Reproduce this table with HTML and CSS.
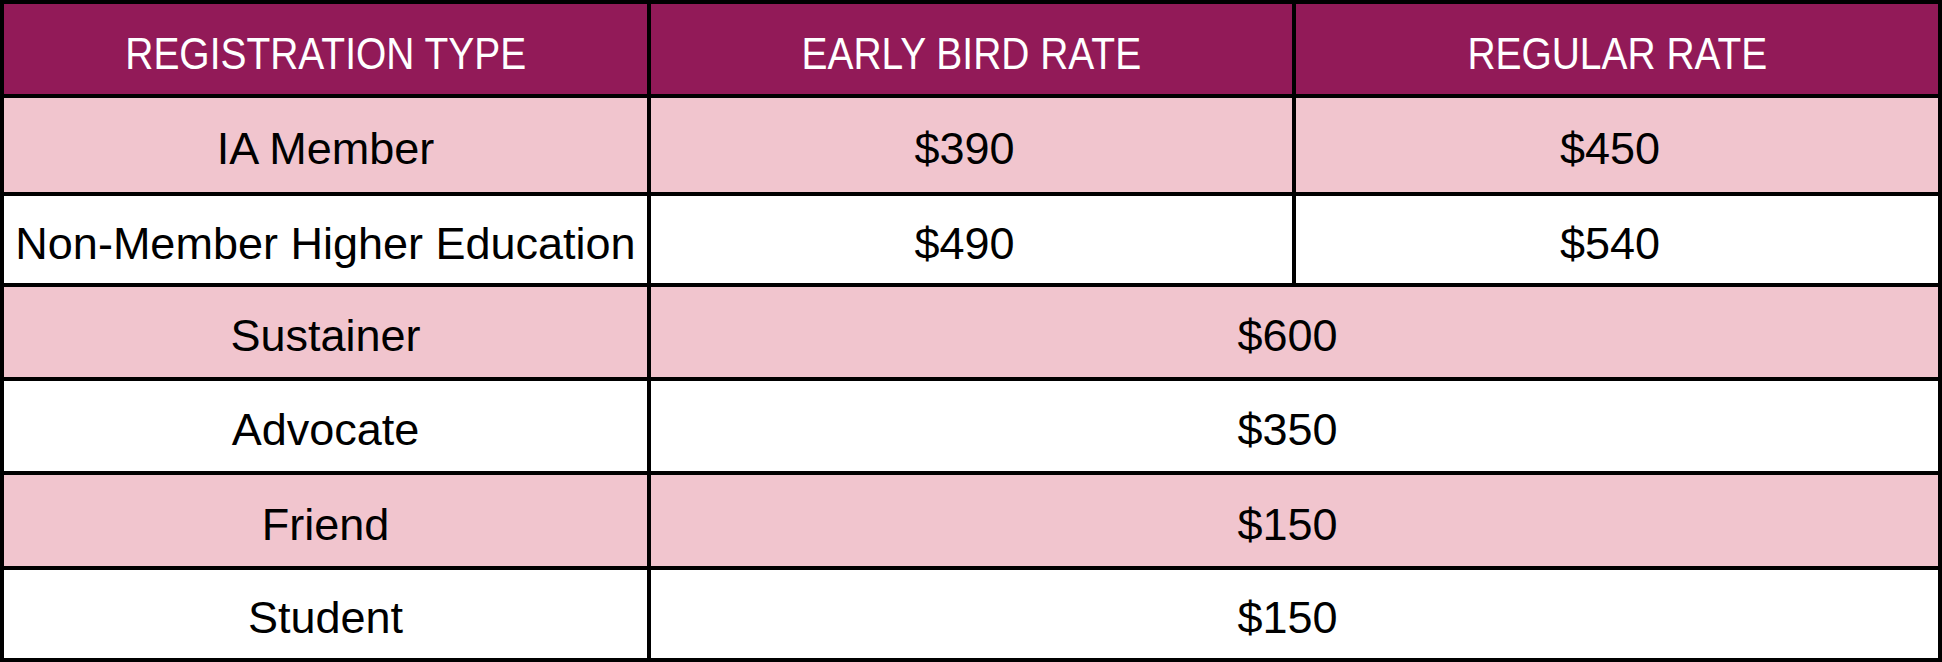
FILE: index.html
```html
<!DOCTYPE html>
<html lang="en">
<head>
<meta charset="utf-8">
<title>Registration Rates</title>
<link rel="stylesheet" href="styles.css">
</head>
<body>
<div class="rates">
  <div class="cell head"><span class="narrow">REGISTRATION TYPE</span></div>
  <div class="cell head"><span class="narrow">EARLY BIRD RATE</span></div>
  <div class="cell head"><span class="narrow">REGULAR RATE</span></div>

  <div class="cell pink">IA Member</div>
  <div class="cell pink num">$390</div>
  <div class="cell pink num">$450</div>

  <div class="cell white">Non-Member Higher Education</div>
  <div class="cell white num">$490</div>
  <div class="cell white num">$540</div>

  <div class="cell pink">Sustainer</div>
  <div class="cell pink num span2">$600</div>

  <div class="cell white">Advocate</div>
  <div class="cell white num span2">$350</div>

  <div class="cell pink">Friend</div>
  <div class="cell pink num span2">$150</div>

  <div class="cell white">Student</div>
  <div class="cell white num span2">$150</div>
</div>
</body>
</html>
```

FILE: styles.css
```css
html, body {
  margin: 0;
  padding: 0;
  background: #ffffff;
}

.rates {
  display: grid;
  grid-template-columns: 643px 641px 642px;
  grid-template-rows: 90px 94px 87px 90px 90px 91px 88px;
  gap: 4px;
  padding: 4px;
  width: 1942px;
  height: 662px;
  box-sizing: border-box;
  background: #000000;
  font-family: "Liberation Sans", Arial, sans-serif;
  font-size: 45px;
  color: #000000;
}

.cell {
  display: flex;
  align-items: center;
  justify-content: center;
  line-height: 1;
  white-space: nowrap;
  padding-top: 7px;
  box-sizing: border-box;
}

.head {
  background: #921a58;
  color: #ffffff;
  padding-top: 8px;
}

.narrow {
  display: inline-block;
  transform: scaleX(0.865);
  transform-origin: center;
}

.num {
  padding-right: 14px;
}

.pink {
  background: #f1c5ce;
}

.white {
  background: #ffffff;
}

.span2 {
  grid-column: span 2;
}
```
